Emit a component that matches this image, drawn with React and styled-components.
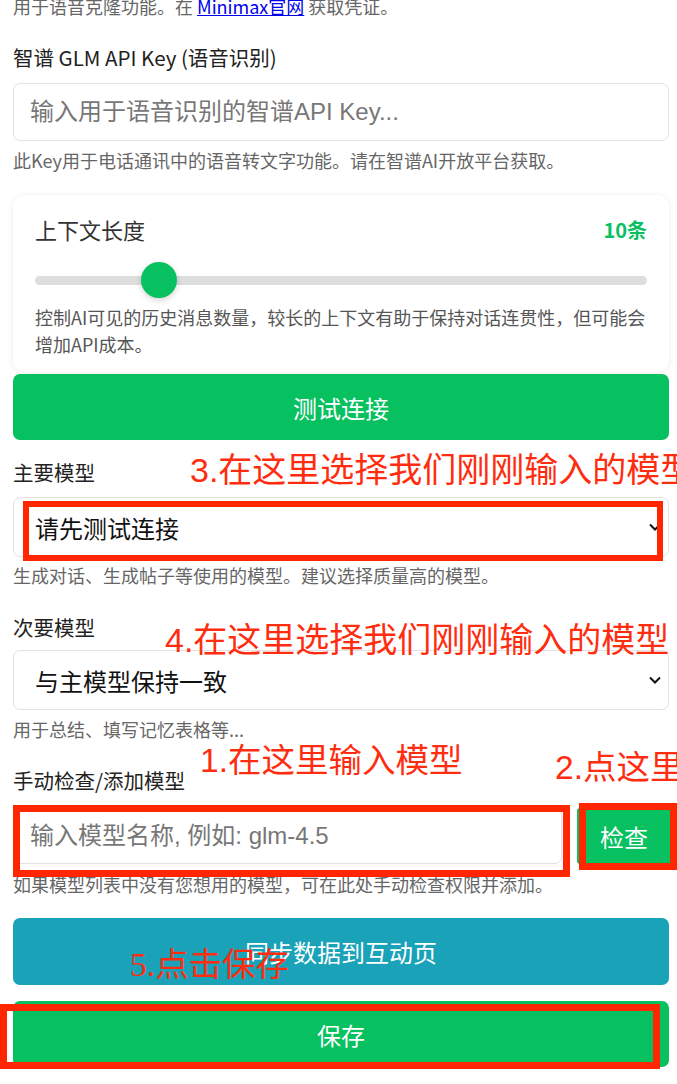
import React from 'react';
import styled, { createGlobalStyle } from 'styled-components';

const GlobalStyle = createGlobalStyle`
  html, body {
    margin: 0;
    padding: 0;
    background: #fff;
    overflow: hidden;
  }
  body {
    font-family: 'Noto Sans CJK SC', 'Noto Sans', sans-serif;
  }
`;

const Page = styled.div`
  position: relative;
  display: flex;
  flex-direction: column;
  padding: 0 8px 40px 13px;

  & > * {
    flex-shrink: 0;
  }
`;

const Help = styled.div`
  font-size: 18px;
  line-height: 24px;
  color: #666;
  margin-top: ${p => p.mt || 0}px;
  white-space: nowrap;

  a {
    color: #0000ee;
    text-decoration: underline;
  }
`;

const Label = styled.div`
  font-size: 20.5px;
  line-height: 28px;
  color: #222;
  margin-top: ${p => p.mt || 0}px;
`;

const TextInput = styled.input`
  box-sizing: border-box;
  height: ${p => p.h || 58}px;
  margin-top: ${p => p.mt || 0}px;
  width: 100%;
  min-width: 0;
  border: 1px solid #e2e2e2;
  border-radius: 7px;
  padding: 0 0 0 16px;
  font-family: 'Liberation Sans', 'Noto Sans CJK SC', sans-serif;
  font-size: 24px;
  color: #222;
  background: #fff;
  outline: none;

  &::placeholder {
    color: #777;
  }
`;

const SelectBox = styled.div`
  box-sizing: border-box;
  height: 60px;
  margin-top: ${p => p.mt || 0}px;
  border: 1px solid #e2e2e2;
  border-radius: 7px;
  padding: 0 7px 0 21px;
  display: flex;
  align-items: center;
  justify-content: space-between;
  font-size: 24px;
  color: #111;
`;

const Card = styled.div`
  margin-top: ${p => p.mt || 0}px;
  background: #fff;
  border-radius: 12px;
  box-shadow: 0 1px 6px rgba(0, 0, 0, 0.08);
  padding: 19px 20px 14px 22px;
`;

const CardHead = styled.div`
  display: flex;
  justify-content: space-between;
  align-items: center;
  height: 30px;
  padding-right: 2px;
`;

const CardTitle = styled.div`
  font-size: 22px;
  color: #333;
`;

const CardValue = styled.div`
  font-size: 20px;
  font-weight: 700;
  color: #07c160;
`;

const SliderWrap = styled.div`
  position: relative;
  height: 36px;
  margin-top: 18px;
  margin-right: 2px;
  display: flex;
  align-items: center;
`;

const Track = styled.div`
  width: 100%;
  height: 9px;
  border-radius: 5px;
  background: #dedede;
`;

const Thumb = styled.div`
  position: absolute;
  top: 0;
  width: 36px;
  height: 36px;
  border-radius: 50%;
  background: #07c160;
  box-shadow: 0 2px 6px rgba(0, 0, 0, 0.18);
`;

const CardDesc = styled.div`
  margin-top: 6px;
  font-size: 18px;
  line-height: 27px;
  color: #555;
`;

const Button = styled.div`
  margin-top: ${p => p.mt || 0}px;
  height: ${p => p.h || 66}px;
  border-radius: 7px;
  background: ${p => p.bg || '#07c160'};
  color: #fff;
  font-size: 24px;
  display: flex;
  align-items: center;
  justify-content: center;
  flex-shrink: 0;
`;

const InputRow = styled.div`
  display: flex;
  gap: 15px;
  margin-top: ${p => p.mt || 0}px;
  margin-right: -2px;
`;

const CheckButton = styled(Button)`
  width: 94px;
  border-radius: 3px;
`;

const Mark = styled.div`
  position: absolute;
  box-sizing: border-box;
  border: ${p => p.bw || 7}px solid #ff2600;
`;

const Note = styled.div`
  position: absolute;
  font-family: ${p => p.serif ? "'Liberation Serif', 'Noto Sans CJK SC', serif" : "'Liberation Sans', 'Noto Sans CJK SC', sans-serif"};
  font-size: ${p => p.size || 34}px;
  line-height: 1;
  color: #ff2d0f;
  white-space: nowrap;
`;

function Chevron() {
  return (
    <svg width="12" height="8" viewBox="0 0 12 8">
      <polyline points="1,1.5 6,6.5 11,1.5" fill="none" stroke="#111" strokeWidth="2" />
    </svg>
  );
}

function Slider({ value, min, max }) {
  const pct = (value - min) / (max - min);
  return (
    <SliderWrap>
      <Track />
      <Thumb style={{ left: `calc((100% - 36px) * ${pct})` }} />
    </SliderWrap>
  );
}

export default function App() {
  return (
    <>
      <GlobalStyle />
      <Page>
        <Help mt={-6}>
          用于语音克隆功能。在 <a href="#">Minimax官网</a> 获取凭证。
        </Help>

        <Label mt={25}>智谱 GLM API Key (语音识别)</Label>
        <TextInput mt={12} placeholder="输入用于语音识别的智谱API Key..." />
        <Help mt={7}>此Key用于电话通讯中的语音转文字功能。请在智谱AI开放平台获取。</Help>

        <Card mt={23}>
          <CardHead>
            <CardTitle>上下文长度</CardTitle>
            <CardValue>10条</CardValue>
          </CardHead>
          <Slider value={10} min={1} max={50} />
          <CardDesc>控制AI可见的历史消息数量，较长的上下文有助于保持对话连贯性，但可能会增加API成本。</CardDesc>
        </Card>

        <Button mt={2}>测试连接</Button>

        <Label mt={18}>主要模型</Label>
        <SelectBox mt={11}>
          <span>请先测试连接</span>
          <Chevron />
        </SelectBox>
        <Help mt={6}>生成对话、生成帖子等使用的模型。建议选择质量高的模型。</Help>

        <Label mt={26}>次要模型</Label>
        <SelectBox mt={9}>
          <span>与主模型保持一致</span>
          <Chevron />
        </SelectBox>
        <Help mt={7}>用于总结、填写记忆表格等...</Help>

        <Label mt={25}>手动检查/添加模型</Label>
        <InputRow mt={14}>
          <TextInput h={56} placeholder="输入模型名称, 例如: glm-4.5" />
          <CheckButton h={56}>检查</CheckButton>
        </InputRow>
        <Help mt={8}>如果模型列表中没有您想用的模型，可在此处手动检查权限并添加。</Help>

        <Button mt={22} h={67} bg="#19a2b8">同步数据到互动页</Button>
        <Button mt={16}>保存</Button>

        <Note style={{ left: 190, top: 453 }}>3.在这里选择我们刚刚输入的模型</Note>
        <Mark bw={6} style={{ left: 23, top: 501, width: 640, height: 60 }} />
        <Note style={{ left: 165, top: 623 }}>4.在这里选择我们刚刚输入的模型</Note>
        <Note size={33.5} style={{ left: 200, top: 744 }}>1.在这里输入模型</Note>
        <Note size={33.5} style={{ left: 555, top: 751 }}>2.点这里</Note>
        <Mark style={{ left: 13, top: 805, width: 557, height: 72 }} />
        <Mark style={{ left: 579, top: 803, width: 98, height: 67 }} />
        <Note serif size={33.5} style={{ left: 130, top: 948 }}>5.点击保存</Note>
        <Mark style={{ left: 0, top: 1004, width: 660, height: 65 }} />
      </Page>
    </>
  );
}
